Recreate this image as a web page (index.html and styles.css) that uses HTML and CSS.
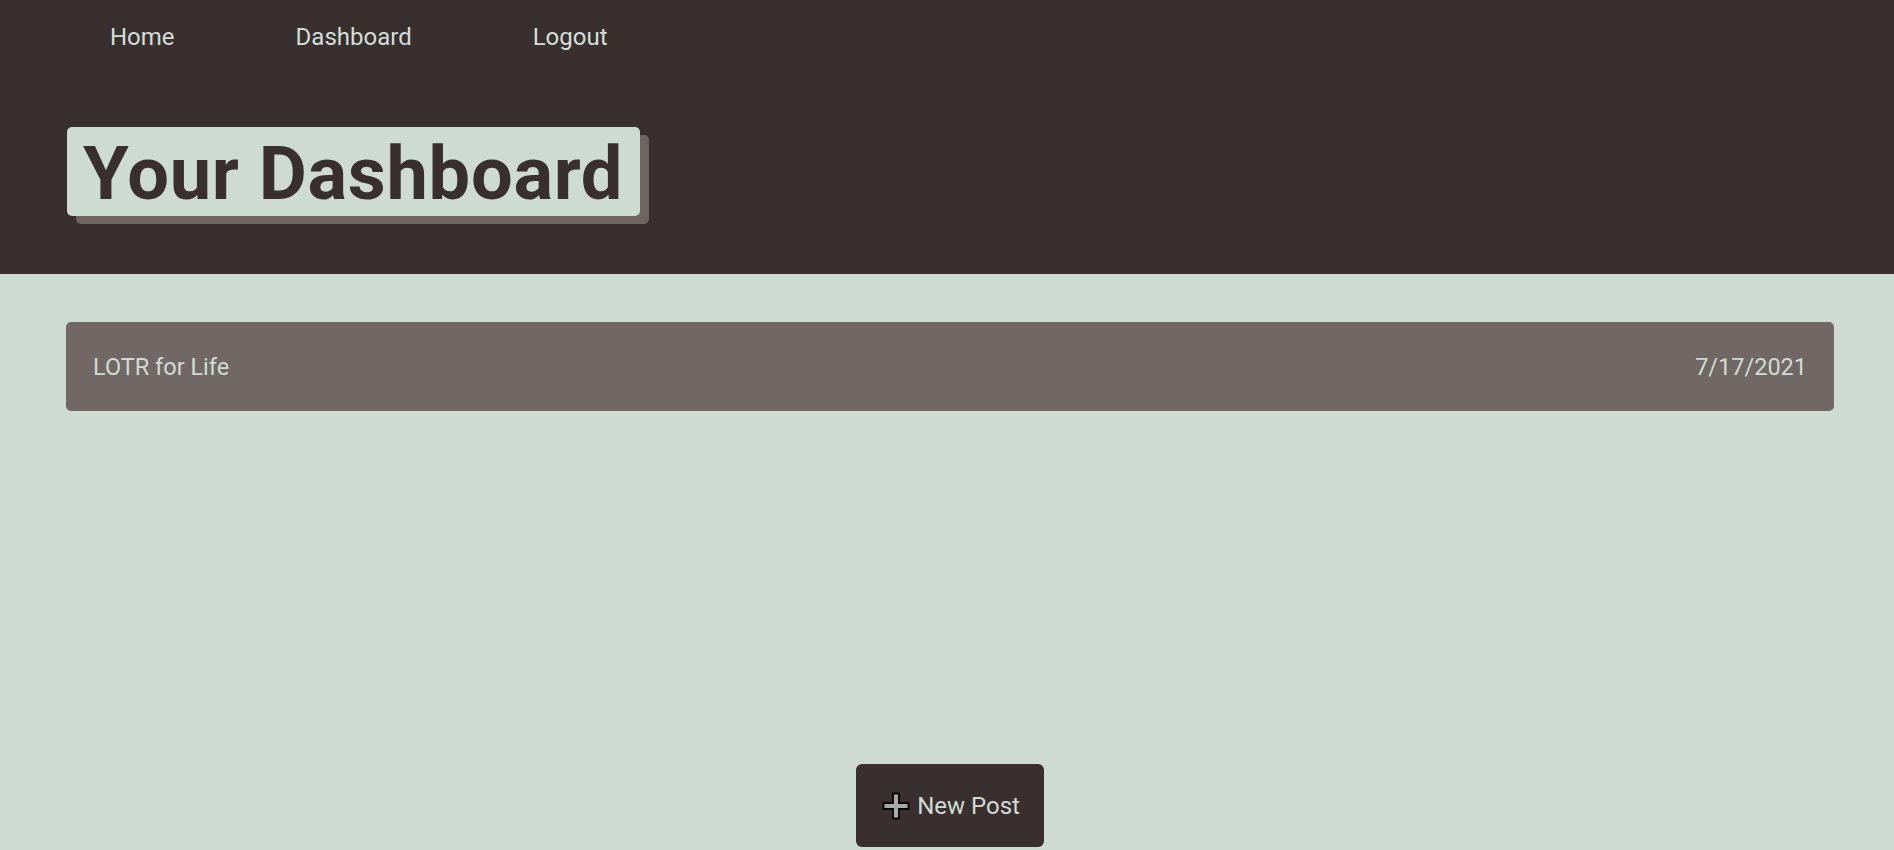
FILE: index.html
```html
<!DOCTYPE html>
<html lang="en">
<head>
<meta charset="utf-8">
<title>Your Dashboard</title>
<link rel="stylesheet" href="styles.css">
</head>
<body>
<header class="site-header">
  <nav class="nav">
    <a class="nav-link" href="#">Home</a>
    <a class="nav-link" href="#">Dashboard</a>
    <a class="nav-link" href="#">Logout</a>
  </nav>
  <h1 class="page-title">Your Dashboard</h1>
</header>
<main class="content">
  <section class="posts">
    <a class="post-card" href="#">
      <span class="post-title">LOTR for Life</span>
      <span class="post-date">7/17/2021</span>
    </a>
  </section>
  <div class="actions">
    <a class="new-post-btn" href="#">
      <svg class="plus-icon" width="28" height="28" viewBox="0 0 28 28" aria-hidden="true">
        <path d="M11 1.5 H17 V11 H26.5 V17 H17 V26.5 H11 V17 H1.5 V11 H11 Z" fill="#a8a8a8" stroke="#000" stroke-width="1.8" stroke-linejoin="miter"/>
      </svg>
      <span>New Post</span>
    </a>
  </div>
</main>
</body>
</html>
```
FILE: styles.css
```css
* {
  box-sizing: border-box;
}

html, body {
  margin: 0;
  padding: 0;
}

body {
  background: #cddbd2;
  font-family: Roboto, "Liberation Sans", sans-serif;
  color: #cddbd2;
  min-height: 850px;
}

a {
  text-decoration: none;
  color: inherit;
}

.site-header {
  background: #392f2e;
  padding: 23px 0 58px 0;
}

.nav {
  display: flex;
  gap: 121px;
  padding-left: 110px;
}

.nav-link {
  font-size: 24px;
  line-height: 28px;
  color: #d2dfd6;
}

.page-title {
  display: inline-block;
  margin: 76px 0 0 67px;
  padding: 4px 17px 0 16px;
  background: #cddbd2;
  color: #392f2e;
  font-size: 74px;
  font-weight: 700;
  letter-spacing: 0.7px;
  line-height: 85px;
  border-radius: 5px;
  box-shadow: 9px 8px 0 #6e6563;
}

.content {
  padding-top: 48px;
}

.posts {
  margin: 0 60px 0 66px;
}

.post-card {
  display: flex;
  justify-content: space-between;
  align-items: center;
  height: 89px;
  padding: 0 27px 0 27px;
  background: #716866;
  border-radius: 5px;
  font-size: 23.5px;
  color: #cfdcd3;
}

.actions {
  display: flex;
  justify-content: center;
  margin-top: 353px;
  padding-left: 6px;
}

.new-post-btn {
  display: flex;
  align-items: center;
  gap: 7px;
  height: 83px;
  padding: 0 24px 0 26px;
  background: #392f2e;
  border-radius: 6px;
  font-size: 24px;
  color: #cfdcd3;
}

.plus-icon {
  display: block;
  flex: none;
}
```
